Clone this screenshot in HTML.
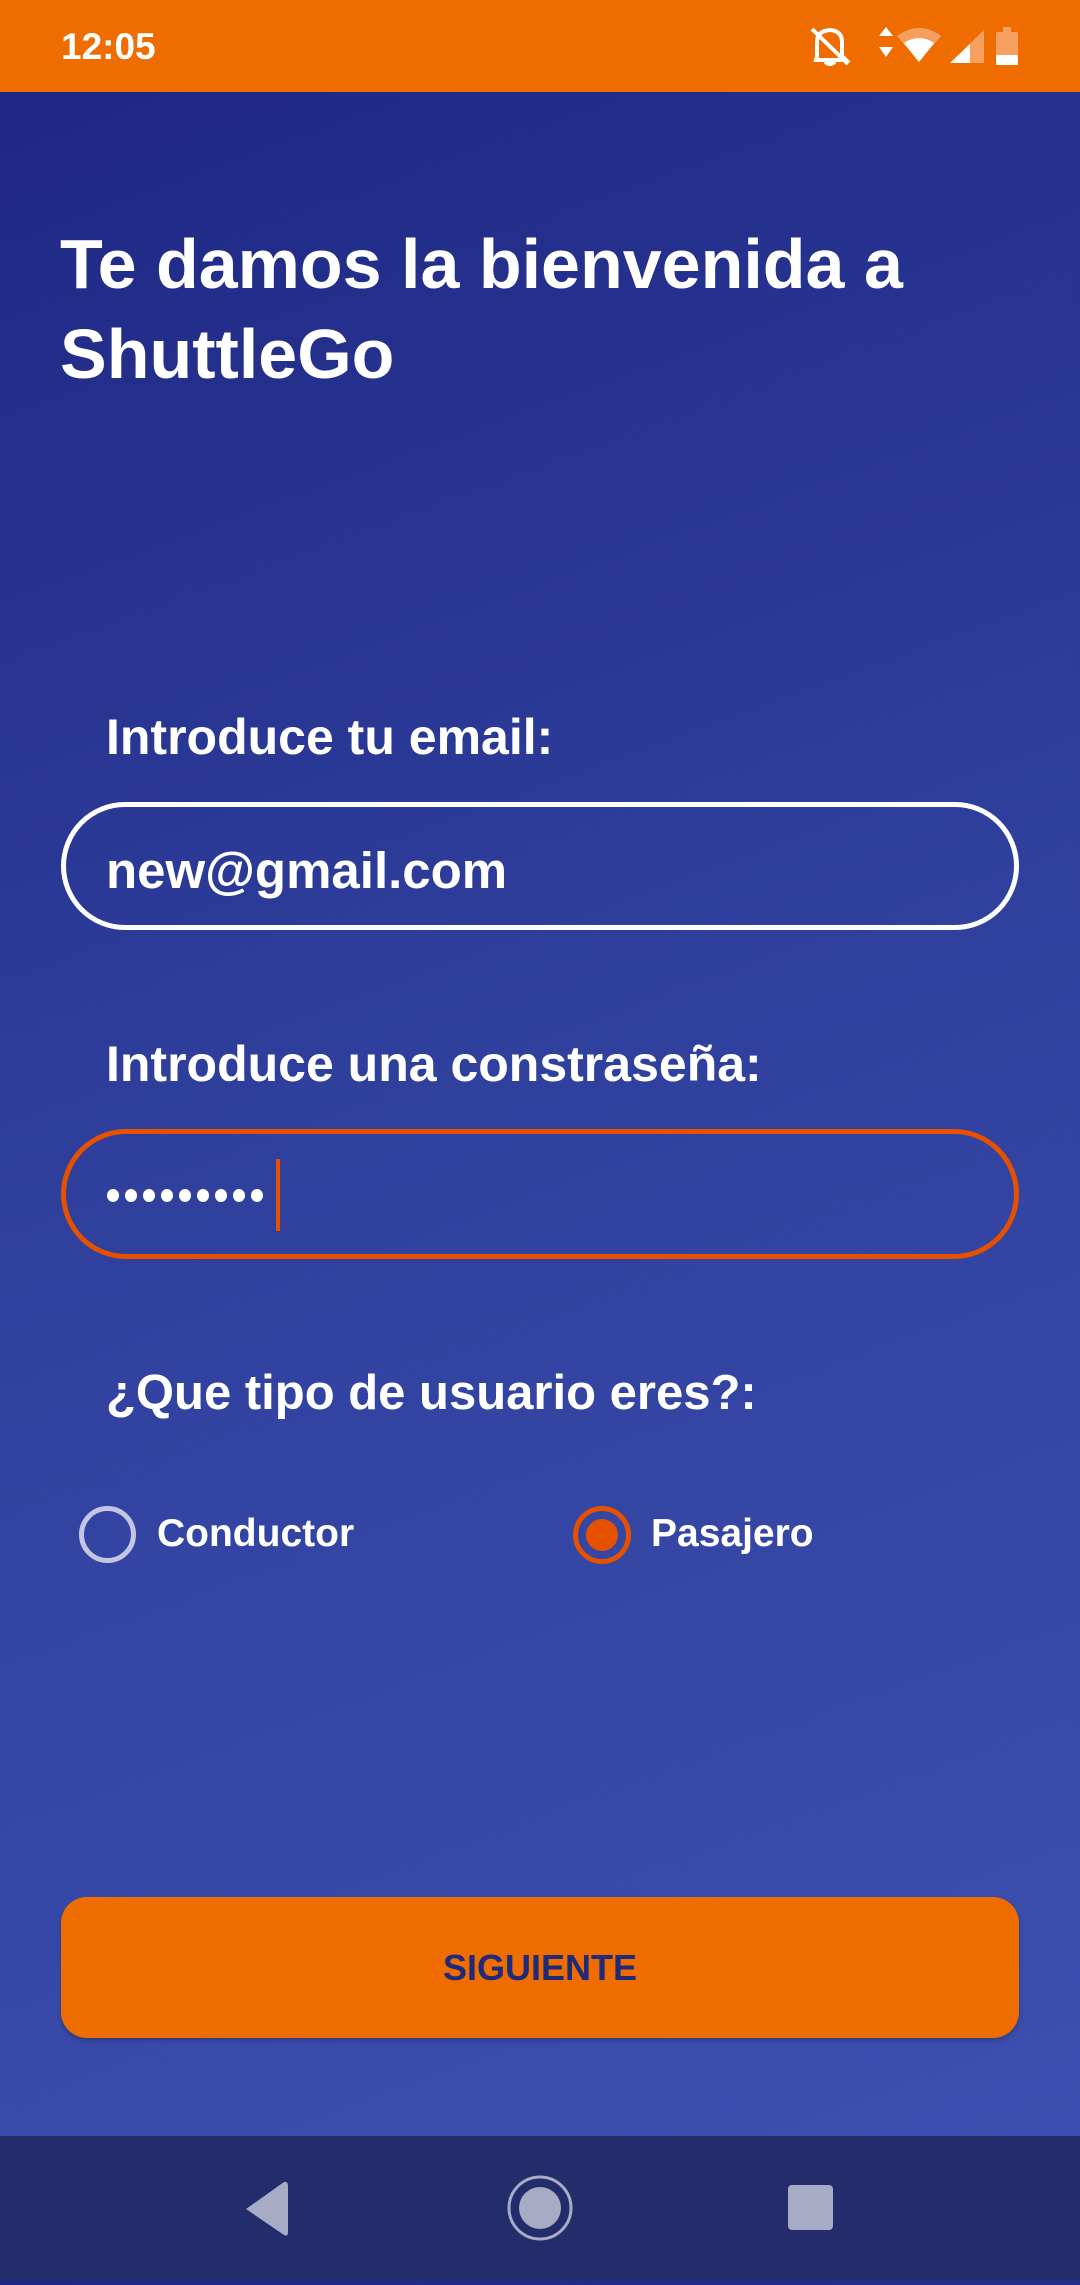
<!DOCTYPE html>
<html><head><meta charset="utf-8"><style>
*{margin:0;padding:0;box-sizing:border-box}
body{width:1080px;height:2280px;position:relative;overflow:hidden;font-family:"Liberation Sans",Roboto,sans-serif;color:#fff;background:linear-gradient(160deg,#1d2682 0%,#2f3f9c 45%,#3e51b2 100%)}
.sb{position:absolute;left:0;top:0;width:1080px;height:92px;background:#ef6c00}
.t{position:absolute;white-space:nowrap;font-weight:bold}
.box{position:absolute;left:61px;width:958px;border-radius:66px}
.nav{position:absolute;left:0;top:2136px;width:1080px;height:144px;background:#232d6b}
.d{position:absolute;top:1189px;width:12px;height:13px;border-radius:50%;background:#fff}
</style></head><body>
<div class="sb">
<div class="t" style="left:61px;top:26px;font-size:37px;font-weight:bold">12:05</div>
<svg style="position:absolute;left:780px;top:0" width="300" height="92" viewBox="0 0 300 92">
<g fill="none" stroke="#fff" stroke-width="4">
<path d="M37 56 L37 42 Q37 31 50 30 Q62 31 62 42 L62 56 L66 60 L36 60 Z"/>
<path d="M45 62 Q50 66 55 62"/>
<line x1="32" y1="29" x2="68" y2="64"/>
</g>
<path fill="#fff" d="M99 36 L106 27 L113 36Z M99 47 L113 47 L106 57Z"/>
<path fill="#f5a060" d="M117 36 Q139 20 161 36 L139 62Z"/>
<path fill="#fff" d="M124 43 Q139 33 154 43 L139 62Z"/>
<path fill="#f5a060" d="M170 63 L204 30 L204 63Z"/>
<path fill="#fff" d="M170 63 L190 44 L190 63Z"/>
<rect x="216" y="32" width="22" height="33" rx="2" fill="#f5a060"/>
<rect x="223" y="27" width="8" height="6" fill="#f5a060"/>
<rect x="216" y="55" width="22" height="10" rx="1" fill="#fff"/>
</svg>
</div>
<div class="t" style="left:60px;top:219px;font-size:70px;line-height:90px">Te damos la bienvenida a<br>ShuttleGo</div>
<div class="t" style="left:106px;top:708px;font-size:50px">Introduce tu email:</div>
<div class="box" style="top:802px;height:128px;border:5px solid #fff"></div>
<div class="t" style="left:106px;top:841px;font-size:51px">new@gmail.com</div>
<div class="t" style="left:106px;top:1035px;font-size:50px">Introduce una constraseña:</div>
<div class="box" style="top:1129px;height:130px;border:5px solid #e65100"></div>
<div class="d" style="left:107px"></div><div class="d" style="left:125px"></div><div class="d" style="left:143px"></div><div class="d" style="left:161px"></div><div class="d" style="left:179px"></div><div class="d" style="left:197px"></div><div class="d" style="left:215px"></div><div class="d" style="left:233px"></div><div class="d" style="left:251px"></div>
<div style="position:absolute;left:276px;top:1159px;width:4px;height:72px;background:#e65100"></div>
<div class="t" style="left:106px;top:1365px;font-size:49px">¿Que tipo de usuario eres?:</div>
<div style="position:absolute;left:79px;top:1506px;width:57px;height:57px;border:5px solid #c2c6e3;border-radius:50%"></div>
<div class="t" style="left:157px;top:1512px;font-size:39px">Conductor</div>
<div style="position:absolute;left:573px;top:1506px;width:58px;height:58px;border:5px solid #e65100;border-radius:50%"></div>
<div style="position:absolute;left:586px;top:1519px;width:32px;height:32px;background:#e65100;border-radius:50%"></div>
<div class="t" style="left:651px;top:1512px;font-size:39px">Pasajero</div>
<div style="position:absolute;left:61px;top:1897px;width:958px;height:141px;background:#ef6c00;border-radius:26px;box-shadow:0 3px 5px rgba(0,0,0,.2)"></div>
<div class="t" style="left:0;width:1080px;text-align:center;top:1947px;font-size:36px;color:#1f2a7a">SIGUIENTE</div>
<div class="nav">
<svg width="1080" height="144" viewBox="0 0 1080 144">
<path d="M246 73 L284 46 Q288 45 288 50 L288 96 Q288 101 284 99Z" fill="#a7abc6"/>
<circle cx="540" cy="72" r="31" fill="none" stroke="#a7abc6" stroke-width="3"/>
<circle cx="540" cy="72" r="21" fill="#a7abc6"/>
<rect x="788" y="49" width="45" height="45" rx="4" fill="#a7abc6"/>
</svg>
</div>
</body></html>
